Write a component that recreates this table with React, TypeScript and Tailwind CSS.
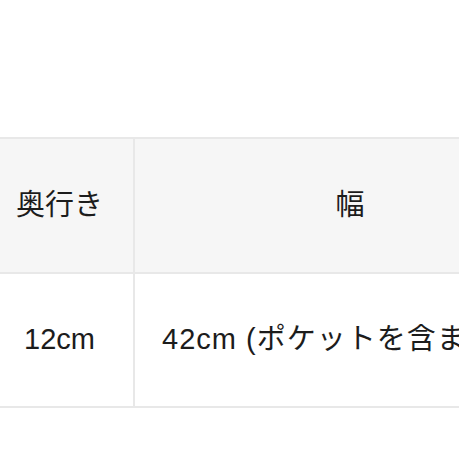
import React from "react";

export default function App() {
  const font = { fontFamily: '"Liberation Sans", "Noto Sans CJK JP", sans-serif' };
  return (
    <div className="w-[459px] h-[459px] overflow-hidden bg-white" style={font}>
      <div className="pt-[137px] w-[565px]">
        <div className="border-t-2 border-b-2 border-[#e8e8e8]">
          <div className="flex h-[133px] bg-[#f6f6f6]">
            <div className="w-[133px] pr-[14px] flex items-center justify-center text-[29px] text-[#1c1c1c]">
              奥行き
            </div>
            <div className="w-[2px] bg-[#e8e8e8]" />
            <div className="flex-1 flex items-center justify-center text-[29px] text-[#1c1c1c]">
              幅
            </div>
          </div>
          <div className="h-[2px] bg-[#e8e8e8]" />
          <div className="flex h-[132px] bg-white">
            <div className="w-[133px] pr-[14px] flex items-center justify-center text-[29px] text-[#1c1c1c]">
              12cm
            </div>
            <div className="w-[2px] bg-[#e8e8e8]" />
            <div className="flex-1 flex items-center pl-[27px] text-[29px] tracking-[1px] text-[#1c1c1c] whitespace-nowrap">
              42cm (ポケットを含まない)
            </div>
          </div>
        </div>
      </div>
    </div>
  );
}
